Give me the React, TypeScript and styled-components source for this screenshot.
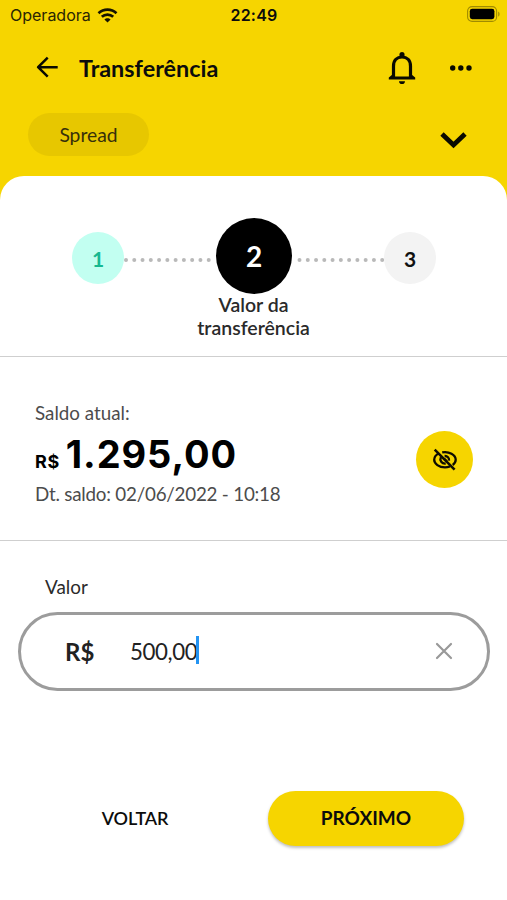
import React from "react";
import styled, { createGlobalStyle } from "styled-components";

const yellow = "#f6d500";

const GlobalStyle = createGlobalStyle`
  *, *::before, *::after { box-sizing: border-box; }
  body { margin: 0; background: #fff; }
  button { border: 0; padding: 0; margin: 0; background: none; font: inherit; color: inherit; }
  svg { display: block; flex: none; }
`;

const Screen = styled.div`
  width: 507px;
  height: 900px;
  overflow: hidden;
  background: ${yellow};
  font-family: Lato, "Liberation Sans", sans-serif;
  color: #0c0c0c;
  display: flex;
  flex-direction: column;
`;

const StatusBar = styled.div`
  height: 30px;
  padding: 0 7px 0 10px;
  display: grid;
  grid-template-columns: 1fr auto 1fr;
  align-items: center;
  font-family: Inter, "Liberation Sans", sans-serif;
  font-size: 16px;
  line-height: 20px;
`;

const Carrier = styled.div`
  display: flex;
  align-items: center;
  gap: 6px;
  color: #2a2503;
`;

const Clock = styled.div`
  font-weight: 600;
  letter-spacing: 0.2px;
  margin-right: 2px;
`;

const BatterySlot = styled.div`
  display: flex;
  justify-content: flex-end;
  margin-top: -2px;
`;

const NavBar = styled.header`
  height: 76px;
  padding: 0 34px 0 35px;
  display: flex;
  align-items: center;
`;

const Title = styled.h1`
  margin: 0 auto 0 20px;
  font-size: 23.4px;
  line-height: 28px;
  font-weight: 700;
`;

const NavActions = styled.div`
  display: flex;
  align-items: center;
  gap: 33px;

  svg { margin-top: -1px; }
`;

const AccountBar = styled.div`
  height: 70px;
  padding: 7px 40px 0 28px;
  display: flex;
  justify-content: space-between;
  align-items: flex-start;
`;

const Chip = styled.div`
  width: 121px;
  height: 43px;
  border-radius: 22px;
  background: #e7c700;
  color: #37300a;
  font-size: 19.3px;
  line-height: 44px;
  text-align: center;
`;

const ExpandButton = styled.button`
  margin-top: 19px;
`;

const Sheet = styled.main`
  flex: 1;
  background: #fff;
  border-radius: 24px 24px 0 0;
`;

const Stepper = styled.section`
  height: 181px;
  padding-top: 41px;
  border-bottom: 1px solid #cfcfcf;
`;

const StepTrack = styled.div`
  display: flex;
  justify-content: center;
  align-items: center;
  height: 77px;
  padding-left: 1px;
`;

const StepDot = styled.div<{ $state: "done" | "current" | "next" }>`
  flex: none;
  display: flex;
  align-items: center;
  justify-content: center;
  border-radius: 50%;
  font-weight: 700;
  width: ${(p) => (p.$state === "current" ? 76 : 52)}px;
  height: ${(p) => (p.$state === "current" ? 76 : 52)}px;
  margin-top: ${(p) => (p.$state === "current" ? 0 : 5)}px;
  font-size: ${(p) => (p.$state === "current" ? 28 : 21)}px;
  background: ${(p) => ({ done: "#c2fff1", current: "#000", next: "#f3f3f3" })[p.$state]};
  color: ${(p) => ({ done: "#17b890", current: "#fff", next: "#111" })[p.$state]};
`;

const Connector = styled.svg`
  margin-top: 9px;
  overflow: visible;
`;

const StepLabel = styled.p`
  margin: -1px auto 0;
  width: 160px;
  text-align: center;
  font-size: 19.5px;
  line-height: 23px;
  font-weight: 600;
  color: #2a2a2a;
`;

const Balance = styled.section`
  height: 184px;
  padding: 44px 34px 0 35px;
  border-bottom: 1px solid #cfcfcf;
  display: flex;
  justify-content: space-between;
`;

const Caption = styled.div`
  font-size: 18.8px;
  line-height: 24px;
  color: #4c4c4c;
`;

const BalanceDate = styled(Caption)`
  letter-spacing: -0.22px;
`;

const Amount = styled.div`
  height: 57px;
  display: flex;
  align-items: baseline;
  gap: 6px;
  font-family: Inter, "Liberation Sans", sans-serif;
  font-weight: 700;
  line-height: 58px;
  color: #000;
`;

const AmountCurrency = styled.span`
  font-size: 18px;
  letter-spacing: 0.6px;
`;

const AmountValue = styled.span`
  font-size: 38px;
  letter-spacing: 0.9px;
`;

const HideButton = styled.button`
  width: 57px;
  height: 57px;
  margin-top: 30px;
  border-radius: 50%;
  background: ${yellow};
  display: flex;
  align-items: center;
  justify-content: center;
`;

const Form = styled.section`
  padding: 34px 17px 0 18px;
`;

const Label = styled.label`
  display: block;
  margin-left: 27px;
  font-size: 18.9px;
  line-height: 24px;
  color: #2b2b2b;
`;

const Field = styled.div`
  height: 79px;
  margin-top: 13px;
  padding: 0 34px 1px 44px;
  border: 3px solid #9c9c9c;
  border-radius: 40px;
  display: flex;
  align-items: center;
`;

const Prefix = styled.span`
  width: 65px;
  font-size: 24px;
  font-weight: 700;
  color: #222;
`;

const Value = styled.span`
  font-size: 22.3px;
  letter-spacing: -0.4px;
  color: #222;
`;

const Caret = styled.span`
  width: 3px;
  height: 28px;
  margin: -2px auto 0 -1px;
  background: #2494f2;
`;

const Actions = styled.footer`
  margin-top: 100px;
  padding: 0 43px 0 37px;
  display: flex;
  justify-content: space-between;
`;

const ActionButton = styled.button<{ $primary?: boolean }>`
  width: 196px;
  height: 55px;
  padding-bottom: 2px;
  border-radius: 28px;
  font-size: ${(p) => (p.$primary ? 19 : 18)}px;
  letter-spacing: ${(p) => (p.$primary ? 0 : -0.15)}px;
  font-weight: ${(p) => (p.$primary ? 700 : 600)};
  background: ${(p) => (p.$primary ? yellow : "transparent")};
  box-shadow: ${(p) => (p.$primary ? "0 2px 3px rgba(0, 0, 0, 0.25)" : "none")};
`;

const WifiIcon = () => (
  <svg width="21" height="15" viewBox="0 0 20 15" fill="none" stroke="#151300" strokeWidth="2.7">
    <path d="M1 5.3C6.2.5 13.8.5 19 5.3" />
    <path d="M4.3 8.8C7.6 5.8 12.4 5.8 15.7 8.8" />
    <path d="M6.9 11.5C8.6 9.7 11.4 9.7 13.1 11.5L10 14.6Z" fill="#151300" stroke="none" />
  </svg>
);

const BatteryIcon = () => (
  <svg width="33" height="16" viewBox="0 0 33 16">
    <rect x=".6" y=".6" width="29" height="14.8" rx="4.5" fill="none" stroke="#a08b00" strokeWidth="1.1" />
    <rect x="2.8" y="2.8" width="24.6" height="10.4" rx="2.4" fill="#000" />
    <path d="M31.2 5.4C33 6.2 33 9.8 31.2 10.6Z" fill="#a08b00" />
  </svg>
);

const BackIcon = () => (
  <svg width="24" height="24" viewBox="0 0 24 24" fill="none" stroke="#0a0a00" strokeWidth="2.5">
    <path d="M12.7 1.7L3.1 11.2L12.7 20.7M3.1 11.2H22.7" strokeLinejoin="round" />
  </svg>
);

const BellIcon = () => (
  <svg width="28" height="34" viewBox="0 0 28 34">
    <path
      d="M5.5 26V15.2C5.5 9.2 9 6 14 6S22.5 9.2 22.5 15.2V26"
      fill="none"
      stroke="#0a0a00"
      strokeWidth="3.2"
    />
    <path d="M11.5 5.5V3.3C11.5.3 16.5.3 16.5 3.3V5.5Z" fill="#0a0a00" />
    <path d="M.8 28.6V26.6L4.5 23.5V25.4H23.5V23.5L27.2 26.6V28.6Z" fill="#0a0a00" />
    <path d="M11 30.2H17C17 34 11 34 11 30.2Z" fill="#0a0a00" />
  </svg>
);

const MoreIcon = () => (
  <svg width="24" height="6" viewBox="0 0 24 6" fill="#0a0a00">
    <circle cx="3.7" cy="3" r="2.7" />
    <circle cx="11.8" cy="3" r="2.7" />
    <circle cx="20" cy="3" r="2.7" />
  </svg>
);

const ChevronIcon = () => (
  <svg width="27" height="17" viewBox="0 0 27 17" fill="none" stroke="#0a0a00" strokeWidth="4.8">
    <path d="M2 2L13.5 13L25 2" />
  </svg>
);

const EyeOffIcon = () => (
  <svg width="26" height="24" viewBox="0 0 26 24" fill="none" stroke="#0f0d00" strokeWidth="2.3">
    <path d="M7.2 5.2C4.2 6.5 2.2 9 2.2 11.8C2.2 15.8 7 19.4 13 19.4C14.8 19.4 16.5 19 18 18.4" />
    <path d="M10.2 4.4C17 3 23.7 6.9 23.7 11.8C23.7 13.8 22.5 15.7 20.7 17" />
    <path d="M8.9 9.2C7.3 12.5 9.8 15.9 13.7 15.5M12.6 8C15.4 7.8 17.4 10 17 12.6" />
    <path d="M12 10.6L15 13.5" />
    <path d="M2.7 1.7L22.6 21.7" strokeWidth="2.5" />
  </svg>
);

const ClearIcon = () => (
  <svg width="18" height="18" viewBox="0 0 18 18" stroke="#999" strokeWidth="2.2" strokeLinecap="round">
    <path d="M2 2L16 16M16 2L2 16" />
  </svg>
);

const DottedLine = ({ start }: { start: number }) => (
  <Connector width="92" height="4" viewBox="0 0 92 4">
    <path
      d={`M${start} 2H91.5`}
      stroke="#b9b9b9"
      strokeWidth="4"
      strokeLinecap="round"
      strokeDasharray="0 8.27"
    />
  </Connector>
);

export default function App() {
  return (
    <Screen>
      <GlobalStyle />
      <StatusBar>
        <Carrier>
          <span>Operadora</span>
          <WifiIcon />
        </Carrier>
        <Clock>22:49</Clock>
        <BatterySlot>
          <BatteryIcon />
        </BatterySlot>
      </StatusBar>
      <NavBar>
        <button aria-label="Voltar">
          <BackIcon />
        </button>
        <Title>Transferência</Title>
        <NavActions>
          <button aria-label="Notificações">
            <BellIcon />
          </button>
          <button aria-label="Mais opções">
            <MoreIcon />
          </button>
        </NavActions>
      </NavBar>
      <AccountBar>
        <Chip>Spread</Chip>
        <ExpandButton aria-label="Expandir">
          <ChevronIcon />
        </ExpandButton>
      </AccountBar>
      <Sheet>
        <Stepper>
          <StepTrack>
            <StepDot $state="done">1</StepDot>
            <DottedLine start={2} />
            <StepDot $state="current">2</StepDot>
            <DottedLine start={7.5} />
            <StepDot $state="next">3</StepDot>
          </StepTrack>
          <StepLabel>
            Valor da
            <br />
            transferência
          </StepLabel>
        </Stepper>
        <Balance>
          <div>
            <Caption>Saldo atual:</Caption>
            <Amount>
              <AmountCurrency>R$</AmountCurrency>
              <AmountValue>1.295,00</AmountValue>
            </Amount>
            <BalanceDate>Dt. saldo: 02/06/2022 - 10:18</BalanceDate>
          </div>
          <HideButton aria-label="Ocultar saldo">
            <EyeOffIcon />
          </HideButton>
        </Balance>
        <Form>
          <Label>Valor</Label>
          <Field>
            <Prefix>R$</Prefix>
            <Value>500,00</Value>
            <Caret />
            <button aria-label="Limpar">
              <ClearIcon />
            </button>
          </Field>
        </Form>
        <Actions>
          <ActionButton>VOLTAR</ActionButton>
          <ActionButton $primary>PRÓXIMO</ActionButton>
        </Actions>
      </Sheet>
    </Screen>
  );
}
